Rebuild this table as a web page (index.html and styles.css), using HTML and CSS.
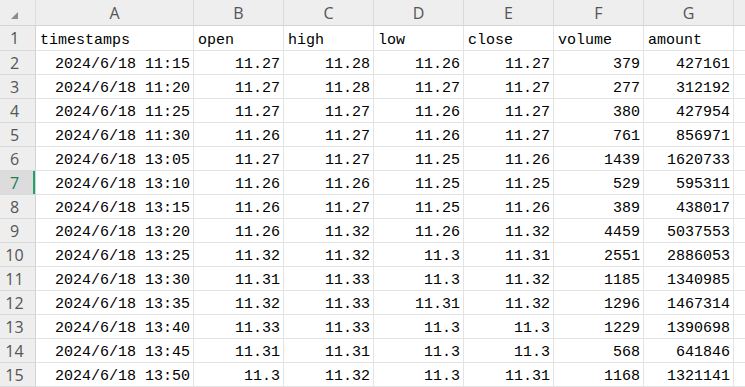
FILE: index.html
```html
<!DOCTYPE html>
<html>
<head>
<meta charset="utf-8">
<link rel="stylesheet" href="styles.css">
</head>
<body>
<div class="sheet">
  <div class="corner"><span class="tri"></span></div>
  <div class="ch">A</div><div class="ch">B</div><div class="ch">C</div><div class="ch">D</div><div class="ch">E</div><div class="ch">F</div><div class="ch">G</div><div class="ch last"></div>

  <div class="rh r1">1</div><div class="c t">timestamps</div><div class="c t">open</div><div class="c t">high</div><div class="c t">low</div><div class="c t">close</div><div class="c t">volume</div><div class="c t">amount</div><div class="c last"></div>

  <div class="rh">2</div><div class="c">2024/6/18 11:15</div><div class="c">11.27</div><div class="c">11.28</div><div class="c">11.26</div><div class="c">11.27</div><div class="c">379</div><div class="c">427161</div><div class="c last"></div>
  <div class="rh">3</div><div class="c">2024/6/18 11:20</div><div class="c">11.27</div><div class="c">11.28</div><div class="c">11.27</div><div class="c">11.27</div><div class="c">277</div><div class="c">312192</div><div class="c last"></div>
  <div class="rh">4</div><div class="c">2024/6/18 11:25</div><div class="c">11.27</div><div class="c">11.27</div><div class="c">11.26</div><div class="c">11.27</div><div class="c">380</div><div class="c">427954</div><div class="c last"></div>
  <div class="rh">5</div><div class="c">2024/6/18 11:30</div><div class="c">11.26</div><div class="c">11.27</div><div class="c">11.26</div><div class="c">11.27</div><div class="c">761</div><div class="c">856971</div><div class="c last"></div>
  <div class="rh">6</div><div class="c">2024/6/18 13:05</div><div class="c">11.27</div><div class="c">11.27</div><div class="c">11.25</div><div class="c">11.26</div><div class="c">1439</div><div class="c">1620733</div><div class="c last"></div>
  <div class="rh sel">7</div><div class="c">2024/6/18 13:10</div><div class="c">11.26</div><div class="c">11.26</div><div class="c">11.25</div><div class="c">11.25</div><div class="c">529</div><div class="c">595311</div><div class="c last"></div>
  <div class="rh">8</div><div class="c">2024/6/18 13:15</div><div class="c">11.26</div><div class="c">11.27</div><div class="c">11.25</div><div class="c">11.26</div><div class="c">389</div><div class="c">438017</div><div class="c last"></div>
  <div class="rh">9</div><div class="c">2024/6/18 13:20</div><div class="c">11.26</div><div class="c">11.32</div><div class="c">11.26</div><div class="c">11.32</div><div class="c">4459</div><div class="c">5037553</div><div class="c last"></div>
  <div class="rh">10</div><div class="c">2024/6/18 13:25</div><div class="c">11.32</div><div class="c">11.32</div><div class="c">11.3</div><div class="c">11.31</div><div class="c">2551</div><div class="c">2886053</div><div class="c last"></div>
  <div class="rh">11</div><div class="c">2024/6/18 13:30</div><div class="c">11.31</div><div class="c">11.33</div><div class="c">11.3</div><div class="c">11.32</div><div class="c">1185</div><div class="c">1340985</div><div class="c last"></div>
  <div class="rh">12</div><div class="c">2024/6/18 13:35</div><div class="c">11.32</div><div class="c">11.33</div><div class="c">11.31</div><div class="c">11.32</div><div class="c">1296</div><div class="c">1467314</div><div class="c last"></div>
  <div class="rh">13</div><div class="c">2024/6/18 13:40</div><div class="c">11.33</div><div class="c">11.33</div><div class="c">11.3</div><div class="c">11.3</div><div class="c">1229</div><div class="c">1390698</div><div class="c last"></div>
  <div class="rh">14</div><div class="c">2024/6/18 13:45</div><div class="c">11.31</div><div class="c">11.31</div><div class="c">11.3</div><div class="c">11.3</div><div class="c">568</div><div class="c">641846</div><div class="c last"></div>
  <div class="rh">15</div><div class="c">2024/6/18 13:50</div><div class="c">11.3</div><div class="c">11.32</div><div class="c">11.3</div><div class="c">11.31</div><div class="c">1168</div><div class="c">1321141</div><div class="c last"></div>
</div>
</body>
</html>
```

FILE: styles.css
```css
html, body {
  margin: 0;
  padding: 0;
  background: #ffffff;
  overflow: hidden;
}

.sheet {
  display: grid;
  grid-template-columns: 36px 158px 90px 90px 90px 90px 90px 90px 40px;
  grid-template-rows: 26px 25px repeat(14, 24px);
  width: 780px;
}

.corner, .ch, .rh, .c {
  box-sizing: border-box;
  border-right: 1px solid #dedede;
  border-bottom: 1px solid #dedede;
  overflow: hidden;
  white-space: nowrap;
}

.corner {
  background: #eeeeee;
  border-bottom-color: #d4d4d4;
  position: relative;
}

.tri {
  position: absolute;
  left: 11px;
  top: 12px;
  width: 0;
  height: 0;
  border-left: 7px solid transparent;
  border-bottom: 7px solid #8c8c8c;
}

.ch {
  background: #eeeeee;
  border-bottom-color: #d4d4d4;
  border-right-color: #dadada;
  display: flex;
  align-items: center;
  justify-content: center;
  font-family: "Open Sans", "Noto Sans", sans-serif;
  font-size: 16px;
  color: #555555;
  padding-top: 1px;
}

.rh {
  background: #eeeeee;
  border-right-color: #d4d4d4;
  border-bottom-color: #dadada;
  display: flex;
  align-items: center;
  justify-content: center;
  padding-right: 6px;
  font-family: "Open Sans", "Noto Sans", sans-serif;
  font-size: 16px;
  color: #555555;
}

.rh.sel {
  background: #dcdcdc;
  color: #1e7b55;
  box-shadow: inset -2px 0 0 #1ea36c;
}

.c {
  display: flex;
  align-items: flex-end;
  justify-content: flex-end;
  padding: 0 3px 1px 3px;
  font-family: "Liberation Mono", monospace;
  font-size: 15px;
  line-height: 17px;
  color: #000000;
  border-right-color: #e3e3e3;
  border-bottom-color: #e3e3e3;
}

.c.t {
  justify-content: flex-start;
  padding-left: 4px;
}
```
